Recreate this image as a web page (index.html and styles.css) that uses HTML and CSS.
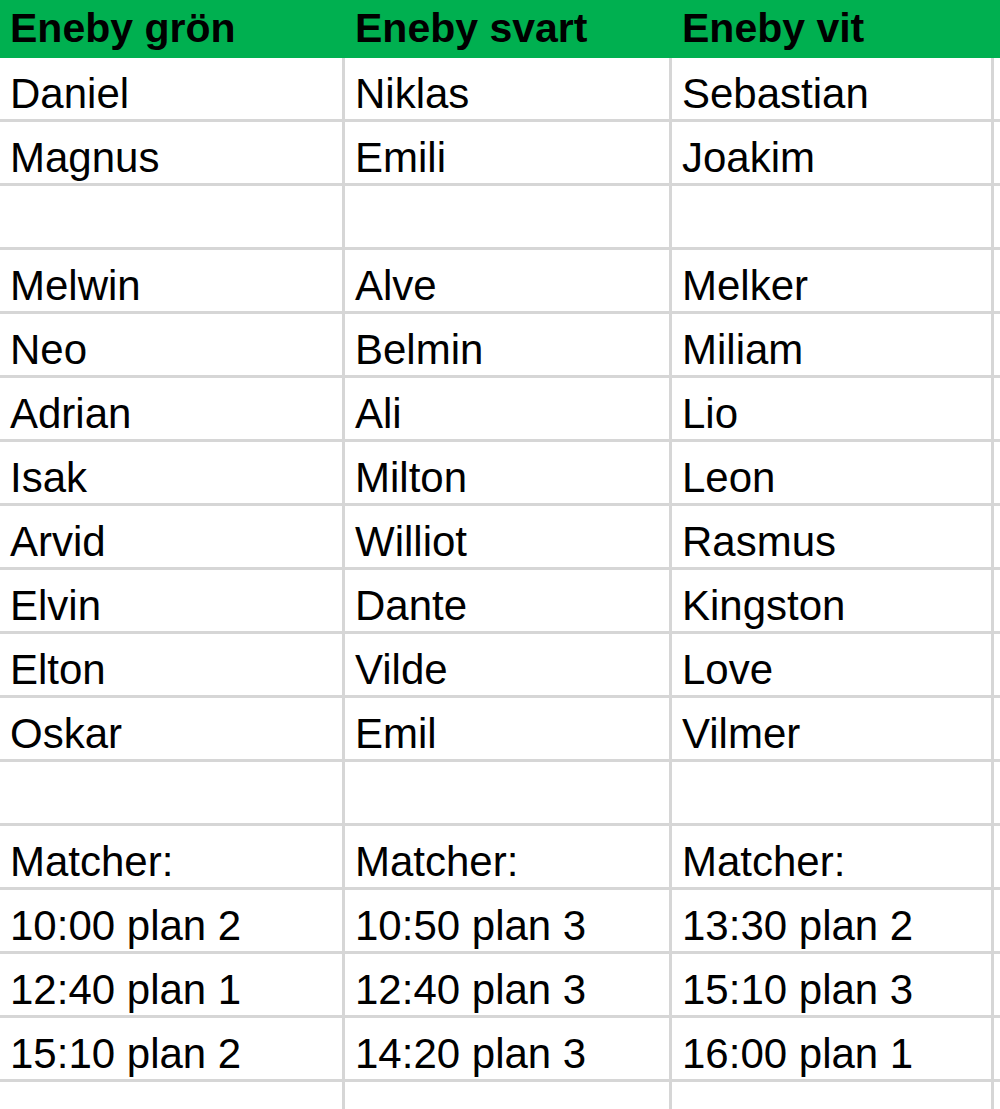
FILE: index.html
```html
<!DOCTYPE html>
<html lang="sv">
<head>
<meta charset="utf-8">
<title>Eneby lag</title>
<link rel="stylesheet" href="styles.css">
</head>
<body>
<div class="sheet">
  <div class="cell head">Eneby grön</div>
  <div class="cell head">Eneby svart</div>
  <div class="cell head">Eneby vit</div>
  <div class="cell head"></div>

  <div class="cell">Daniel</div><div class="cell">Niklas</div><div class="cell">Sebastian</div><div class="cell"></div>
  <div class="cell">Magnus</div><div class="cell">Emili</div><div class="cell">Joakim</div><div class="cell"></div>
  <div class="cell"></div><div class="cell"></div><div class="cell"></div><div class="cell"></div>
  <div class="cell">Melwin</div><div class="cell">Alve</div><div class="cell">Melker</div><div class="cell"></div>
  <div class="cell">Neo</div><div class="cell">Belmin</div><div class="cell">Miliam</div><div class="cell"></div>
  <div class="cell">Adrian</div><div class="cell">Ali</div><div class="cell">Lio</div><div class="cell"></div>
  <div class="cell">Isak</div><div class="cell">Milton</div><div class="cell">Leon</div><div class="cell"></div>
  <div class="cell">Arvid</div><div class="cell">Williot</div><div class="cell">Rasmus</div><div class="cell"></div>
  <div class="cell">Elvin</div><div class="cell">Dante</div><div class="cell">Kingston</div><div class="cell"></div>
  <div class="cell">Elton</div><div class="cell">Vilde</div><div class="cell">Love</div><div class="cell"></div>
  <div class="cell">Oskar</div><div class="cell">Emil</div><div class="cell">Vilmer</div><div class="cell"></div>
  <div class="cell"></div><div class="cell"></div><div class="cell"></div><div class="cell"></div>
  <div class="cell">Matcher:</div><div class="cell">Matcher:</div><div class="cell">Matcher:</div><div class="cell"></div>
  <div class="cell">10:00 plan 2</div><div class="cell">10:50 plan 3</div><div class="cell">13:30 plan 2</div><div class="cell"></div>
  <div class="cell">12:40 plan 1</div><div class="cell">12:40 plan 3</div><div class="cell">15:10 plan 3</div><div class="cell"></div>
  <div class="cell">15:10 plan 2</div><div class="cell">14:20 plan 3</div><div class="cell">16:00 plan 1</div><div class="cell"></div>
  <div class="cell"></div><div class="cell"></div><div class="cell"></div><div class="cell"></div>
</div>
</body>
</html>
```

FILE: styles.css
```css
html, body {
  margin: 0;
  padding: 0;
  background: #ffffff;
}

body {
  font-family: "Liberation Sans", Arial, sans-serif;
  color: #000000;
  overflow: hidden;
}

.sheet {
  display: grid;
  grid-template-columns: 345px 327px 322px 1fr;
  width: 1000px;
}

.cell {
  box-sizing: border-box;
  height: 64px;
  padding: 12px 0 0 10px;
  font-size: 42px;
  line-height: 47px;
  white-space: nowrap;
  overflow: hidden;
  border-right: 3px solid #d6d6d6;
  border-bottom: 3px solid #d6d6d6;
}

.cell.head {
  height: 58px;
  padding-top: 5px;
  background: #00b050;
  font-weight: bold;
  font-size: 41px;
  border: none;
}
```
